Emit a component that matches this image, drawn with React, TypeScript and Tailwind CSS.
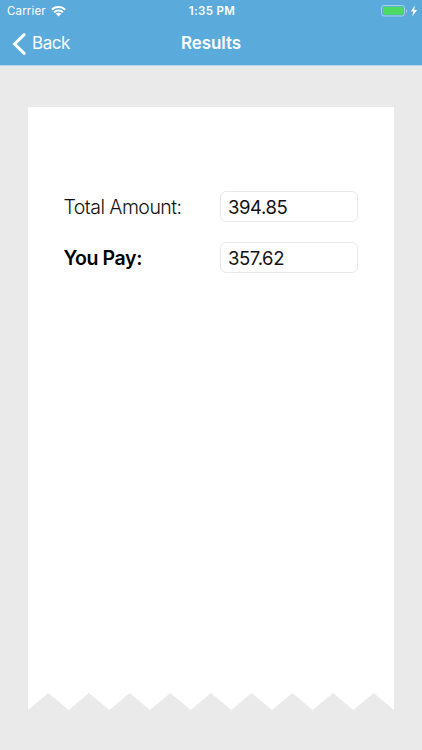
const teeth = 9;
const toothWidth = 366 / teeth;
const tornEdge =
  'M0 0H366V17' +
  Array.from({ length: teeth }, (_, i) => {
    const right = 366 - i * toothWidth;
    return `L${right - toothWidth / 2} 0L${right - toothWidth} 17`;
  }).join('') +
  'Z';

function StatusBar() {
  return (
    <div className="grid h-[22px] grid-cols-3 items-center text-[11.5px] leading-[22px]">
      <div className="flex items-center pl-[7px]">
        <span className="w-[44px] whitespace-nowrap tracking-[0.15px]">Carrier</span>
        <svg width="15" height="11" viewBox="0 0 15 11" fill="white">
          <path d="M7.5 0C4.6 0 2 1.1.1 2.9l1.5 1.5a8.5 8.5 0 0 1 11.8 0l1.5-1.5A10.7 10.7 0 0 0 7.5 0Z" />
          <path d="M7.5 3.4c-2 0-3.8.8-5.1 2l1.5 1.5a5.2 5.2 0 0 1 7.2 0l1.5-1.5a7.3 7.3 0 0 0-5.1-2Z" />
          <path d="M7.5 6.8c-1.1 0-2 .4-2.8 1l2.8 2.8 2.8-2.8c-.8-.6-1.7-1-2.8-1Z" />
        </svg>
      </div>
      <span className="pl-[2px] text-center font-semibold tracking-[0.35px]">1:35 PM</span>
      <div className="flex items-center justify-end pr-[4px]">
        <svg width="37" height="12" viewBox="0 0 37 12">
          <rect x=".5" y=".5" width="23" height="10.5" rx="2.5" fill="none" stroke="#a5d1ed" />
          <rect x="1.8" y="1.8" width="20.4" height="7.9" rx="1.2" fill="#4cd964" />
          <path d="M25 4v4c1.2-.5 1.2-3.5 0-4Z" fill="#a5d1ed" />
          <path d="M33.8.6 29.8 6.5h2.5L31.3 11.2l4.9-6.1h-3Z" fill="white" />
        </svg>
      </div>
    </div>
  );
}

function Header() {
  return (
    <header className="h-[66px] border-b border-[#b6d6e9] bg-[#5aaadc] text-white">
      <StatusBar />
      <div className="grid h-[43px] grid-cols-3 items-center text-[17px]">
        <button className="flex items-center gap-[6px] pl-[12px]">
          <svg width="14" height="22" viewBox="0 0 14 22" fill="none" stroke="white" strokeWidth="3" strokeLinecap="round">
            <path d="M12.2 1.6 2.6 11l9.6 9.4" />
          </svg>
          <span className="tracking-[-0.45px]">Back</span>
        </button>
        <h1 className="text-center font-semibold tracking-[-0.05px]">Results</h1>
      </div>
    </header>
  );
}

function AmountBox({ value }: { value: string }) {
  return (
    <div className="flex h-[31px] w-[138px] items-center rounded-[6px] border border-[#e9e9e9] pt-[2px] pl-[7px] text-[18.5px] tracking-[-0.4px] text-[#111]">
      {value}
    </div>
  );
}

export default function App() {
  return (
    <div className="flex h-[750px] w-[422px] flex-col overflow-hidden bg-[#eaeaea] font-['Inter','Liberation_Sans',sans-serif]">
      <Header />
      <main className="px-[28px] pt-[41px]">
        <div className="flex h-[586px] flex-col gap-[20px] bg-white pt-[84px] pr-[36px] pl-[35.5px]">
          <div className="flex items-center justify-between">
            <span className="pt-[2px] text-[19.5px] font-light tracking-[-0.55px] whitespace-nowrap text-[#111]">Total Amount:</span>
            <AmountBox value="394.85" />
          </div>
          <div className="flex items-center justify-between">
            <span className="pt-[2px] text-[19.5px] font-semibold tracking-[-0.4px] whitespace-nowrap text-black">You Pay:</span>
            <AmountBox value="357.62" />
          </div>
        </div>
        <svg className="block" width="366" height="17" viewBox="0 0 366 17">
          <path d={tornEdge} fill="white" />
        </svg>
      </main>
    </div>
  );
}
